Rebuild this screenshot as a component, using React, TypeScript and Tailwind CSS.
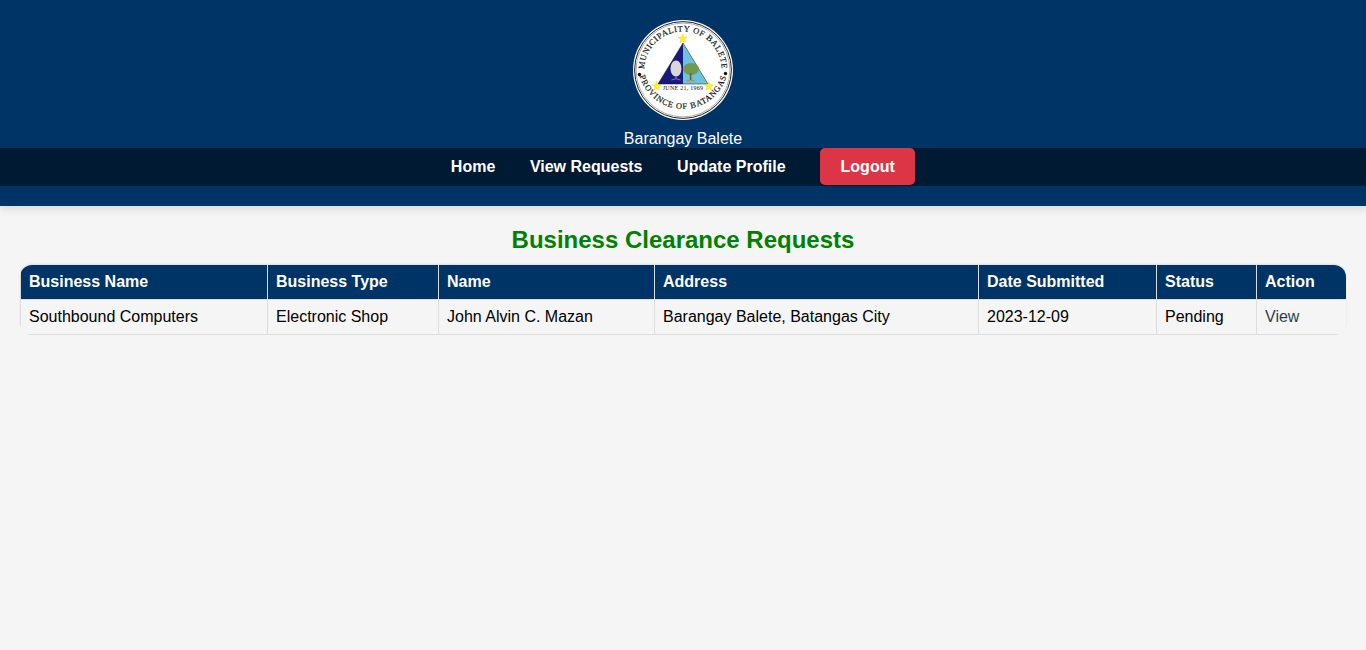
const columns = ['Business Name', 'Business Type', 'Name', 'Address', 'Date Submitted', 'Status', 'Action'];
const row = ['Southbound Computers', 'Electronic Shop', 'John Alvin C. Mazan', 'Barangay Balete, Batangas City', '2023-12-09', 'Pending'];
const widths = ['w-[247px]', 'w-[171px]', 'w-[216px]', 'w-[324px]', 'w-[178px]', 'w-[100px]', 'w-[90px]'];

function Star({ x, y, r }: { x: number; y: number; r: number }) {
  const pts = Array.from({ length: 10 }, (_, i) => {
    const a = (Math.PI / 5) * i - Math.PI / 2;
    const d = i % 2 === 0 ? r : r * 0.42;
    return `${x + d * Math.cos(a)},${y + d * Math.sin(a)}`;
  }).join(' ');
  return <polygon points={pts} fill="#fff22a" stroke="#b8a800" strokeWidth="0.2" />;
}

function Seal() {
  return (
    <svg viewBox="0 0 100 100" className="w-[100px] h-[100px] block">
      <defs>
        <path id="sealTop" d="M 11.8 57 A 38.8 38.8 0 1 1 88.2 57" />
        <path id="sealBottom" d="M 5.1 47 A 45 45 0 0 0 94.9 47" />
      </defs>
      <circle cx="50" cy="50" r="50" fill="#fff" />
      <circle cx="50" cy="50" r="48.4" fill="none" stroke="#222" strokeWidth="1" />
      <circle cx="50" cy="50" r="46.9" fill="none" stroke="#333" strokeWidth="0.4" />
      <text fontSize="8.4" fontFamily="'Liberation Serif', serif" fill="#111" stroke="#111" strokeWidth="0.18" letterSpacing="0.6">
        <textPath href="#sealTop" startOffset="50%" textAnchor="middle">MUNICIPALITY OF BALETE</textPath>
      </text>
      <text fontSize="8.4" fontFamily="'Liberation Serif', serif" fill="#111" stroke="#111" strokeWidth="0.18" letterSpacing="0.8">
        <textPath href="#sealBottom" startOffset="50%" textAnchor="middle">PROVINCE OF BATANGAS</textPath>
      </text>
      <circle cx="6.5" cy="54.5" r="1.7" fill="#111" />
      <circle cx="92.5" cy="53.5" r="1.7" fill="#111" />
      <polygon points="50,23 50,64 25,64" fill="#1a1a7e" />
      <polygon points="50,23 50,64 75,64" fill="#6cc4dc" />
      <path d="M50 23 L25 64 L75 64 Z" fill="none" stroke="#111" strokeWidth="0.5" />
      <ellipse cx="43" cy="48.5" rx="5.5" ry="8" fill="#d8d8da" />
      <path d="M43 56 V59 M38.5 60 Q43 57.5 47.5 60" stroke="#cfcfcf" strokeWidth="0.5" fill="none" />
      <ellipse cx="58" cy="49" rx="8" ry="6" fill="#6f9a50" />
      <rect x="56.8" y="53" width="1.6" height="7" fill="#7a5a30" />
      <rect x="53" y="60" width="9" height="1.5" fill="#a89a6a" />
      <text x="50" y="69.8" textAnchor="middle" fontSize="6" fontFamily="'Liberation Serif', serif" fill="#111" letterSpacing="0.25">JUNE 21, 1969</text>
      <Star x={49.8} y={18.8} r={5} />
      <Star x={23.7} y={66.3} r={5} />
      <Star x={75.7} y={66.3} r={5} />
    </svg>
  );
}

export default function App() {
  return (
    <div className="min-h-[650px] bg-[#f5f5f5] font-['Liberation_Sans',Arial,sans-serif] text-[16px] text-black">
      <header className="h-[206px] bg-[#003366] pt-5 shadow-[0_4px_8px_rgba(0,0,0,0.1)] flex flex-col items-center">
        <Seal />
        <div className="mt-[9px] h-[19px] leading-[19px] text-white">Barangay Balete</div>
        <nav className="w-full h-[38px] bg-[#001a33] flex justify-center items-start gap-[34.6px] font-bold text-white">
          <a className="mt-[9px] leading-[19px]">Home</a>
          <a className="mt-[9px] leading-[19px]">View Requests</a>
          <a className="mt-[9px] leading-[19px]">Update Profile</a>
          <a className="bg-[#dc3545] rounded-[5px] h-[37px] w-[95px] flex items-center justify-center shadow-[0_1px_2px_rgba(0,0,0,0.2)]">Logout</a>
        </nav>
      </header>
      <main className="px-5">
        <h2 className="mt-[20px] mb-[11px] h-[28px] leading-[28px] text-center text-[24px] font-bold text-[#008000]">
          Business Clearance Requests
        </h2>
        <div className="rounded-[12px] overflow-hidden shadow-[0_-1px_2px_rgba(0,0,0,0.1)]">
          <table className="w-full table-fixed border-collapse">
            <thead>
              <tr className="bg-[#003366] text-white">
                {columns.map((c, i) => (
                  <th key={c} className={`${widths[i]} h-[34px] px-2 text-left font-bold border-x border-[#dddddd]`}>{c}</th>
                ))}
              </tr>
            </thead>
            <tbody>
              <tr>
                {row.map((c) => (
                  <td key={c} className="h-[35px] px-2 border border-[#dddddd]">{c}</td>
                ))}
                <td className="h-[35px] px-2 border border-[#dddddd] text-[#2c3e50]">View</td>
              </tr>
            </tbody>
          </table>
        </div>
      </main>
    </div>
  );
}
